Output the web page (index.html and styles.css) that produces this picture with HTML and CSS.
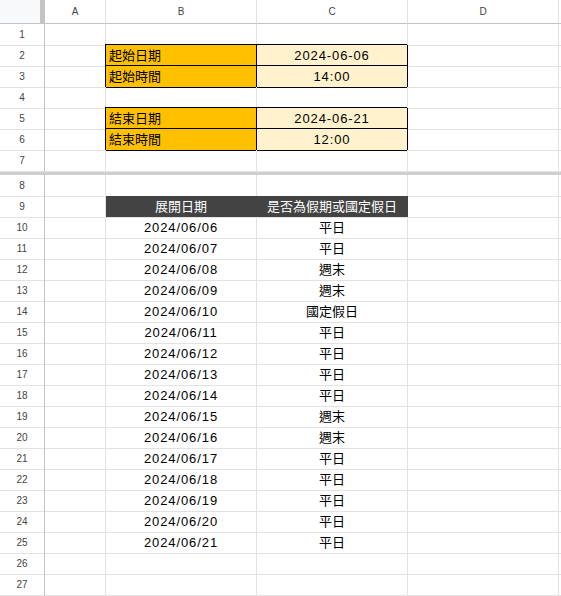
FILE: index.html
```html
<!DOCTYPE html>
<html lang="zh-Hant">
<head>
<meta charset="utf-8">
<title>Sheet</title>
<link rel="stylesheet" href="styles.css">
</head>
<body>
<div class="sheet">
  <div class="row head">
    <div class="cell corner"></div>
    <div class="cell col">A</div>
    <div class="cell col">B</div>
    <div class="cell col">C</div>
    <div class="cell col">D</div>
    <div class="cell end"></div>
  </div>
  <div class="row"><div class="cell rh">1</div><div class="cell"></div><div class="cell"></div><div class="cell"></div><div class="cell"></div><div class="cell end"></div></div>
  <div class="row"><div class="cell rh">2</div><div class="cell"></div><div class="cell box label">起始日期</div><div class="cell box value num">2024-06-06</div><div class="cell"></div><div class="cell end"></div></div>
  <div class="row"><div class="cell rh">3</div><div class="cell"></div><div class="cell box label">起始時間</div><div class="cell box value num">14:00</div><div class="cell"></div><div class="cell end"></div></div>
  <div class="row"><div class="cell rh">4</div><div class="cell"></div><div class="cell"></div><div class="cell"></div><div class="cell"></div><div class="cell end"></div></div>
  <div class="row"><div class="cell rh">5</div><div class="cell"></div><div class="cell box label">結束日期</div><div class="cell box value num">2024-06-21</div><div class="cell"></div><div class="cell end"></div></div>
  <div class="row"><div class="cell rh">6</div><div class="cell"></div><div class="cell box label">結束時間</div><div class="cell box value num">12:00</div><div class="cell"></div><div class="cell end"></div></div>
  <div class="row"><div class="cell rh">7</div><div class="cell"></div><div class="cell"></div><div class="cell"></div><div class="cell"></div><div class="cell end"></div></div>
  <div class="freeze"></div>
  <div class="row"><div class="cell rh">8</div><div class="cell"></div><div class="cell"></div><div class="cell"></div><div class="cell"></div><div class="cell end"></div></div>
  <div class="row"><div class="cell rh">9</div><div class="cell"></div><div class="cell th">展開日期</div><div class="cell th">是否為假期或國定假日</div><div class="cell"></div><div class="cell end"></div></div>
  <div class="row"><div class="cell rh">10</div><div class="cell"></div><div class="cell c num">2024/06/06</div><div class="cell c">平日</div><div class="cell"></div><div class="cell end"></div></div>
  <div class="row"><div class="cell rh">11</div><div class="cell"></div><div class="cell c num">2024/06/07</div><div class="cell c">平日</div><div class="cell"></div><div class="cell end"></div></div>
  <div class="row"><div class="cell rh">12</div><div class="cell"></div><div class="cell c num">2024/06/08</div><div class="cell c">週末</div><div class="cell"></div><div class="cell end"></div></div>
  <div class="row"><div class="cell rh">13</div><div class="cell"></div><div class="cell c num">2024/06/09</div><div class="cell c">週末</div><div class="cell"></div><div class="cell end"></div></div>
  <div class="row"><div class="cell rh">14</div><div class="cell"></div><div class="cell c num">2024/06/10</div><div class="cell c">國定假日</div><div class="cell"></div><div class="cell end"></div></div>
  <div class="row"><div class="cell rh">15</div><div class="cell"></div><div class="cell c num">2024/06/11</div><div class="cell c">平日</div><div class="cell"></div><div class="cell end"></div></div>
  <div class="row"><div class="cell rh">16</div><div class="cell"></div><div class="cell c num">2024/06/12</div><div class="cell c">平日</div><div class="cell"></div><div class="cell end"></div></div>
  <div class="row"><div class="cell rh">17</div><div class="cell"></div><div class="cell c num">2024/06/13</div><div class="cell c">平日</div><div class="cell"></div><div class="cell end"></div></div>
  <div class="row"><div class="cell rh">18</div><div class="cell"></div><div class="cell c num">2024/06/14</div><div class="cell c">平日</div><div class="cell"></div><div class="cell end"></div></div>
  <div class="row"><div class="cell rh">19</div><div class="cell"></div><div class="cell c num">2024/06/15</div><div class="cell c">週末</div><div class="cell"></div><div class="cell end"></div></div>
  <div class="row"><div class="cell rh">20</div><div class="cell"></div><div class="cell c num">2024/06/16</div><div class="cell c">週末</div><div class="cell"></div><div class="cell end"></div></div>
  <div class="row"><div class="cell rh">21</div><div class="cell"></div><div class="cell c num">2024/06/17</div><div class="cell c">平日</div><div class="cell"></div><div class="cell end"></div></div>
  <div class="row"><div class="cell rh">22</div><div class="cell"></div><div class="cell c num">2024/06/18</div><div class="cell c">平日</div><div class="cell"></div><div class="cell end"></div></div>
  <div class="row"><div class="cell rh">23</div><div class="cell"></div><div class="cell c num">2024/06/19</div><div class="cell c">平日</div><div class="cell"></div><div class="cell end"></div></div>
  <div class="row"><div class="cell rh">24</div><div class="cell"></div><div class="cell c num">2024/06/20</div><div class="cell c">平日</div><div class="cell"></div><div class="cell end"></div></div>
  <div class="row"><div class="cell rh">25</div><div class="cell"></div><div class="cell c num">2024/06/21</div><div class="cell c">平日</div><div class="cell"></div><div class="cell end"></div></div>
  <div class="row"><div class="cell rh">26</div><div class="cell"></div><div class="cell"></div><div class="cell"></div><div class="cell"></div><div class="cell end"></div></div>
  <div class="row"><div class="cell rh">27</div><div class="cell"></div><div class="cell"></div><div class="cell"></div><div class="cell"></div><div class="cell end"></div></div>
  <div class="row tail"><div class="cell rh"></div><div class="cell"></div><div class="cell"></div><div class="cell"></div><div class="cell"></div><div class="cell end"></div></div>
</div>
</body>
</html>
```

FILE: styles.css
```css
* { box-sizing: border-box; }
html, body {
  margin: 0;
  padding: 0;
  background: #fff;
  overflow: hidden;
}
body {
  font-family: "Liberation Sans", "Noto Sans CJK TC", sans-serif;
  font-size: 13px;
  color: #000;
}
.sheet {
  width: 561px;
  height: 596px;
  overflow: hidden;
}
.row {
  display: grid;
  grid-template-columns: 45px 61px 151px 151px 151px 1fr;
  height: 21px;
}
.row.head {
  height: 24px;
}
.row.tail {
  height: 2px;
}
.tail .cell {
  border-bottom: none;
}
.cell {
  display: flex;
  align-items: center;
  border-right: 1px solid #e2e2e2;
  border-bottom: 1px solid #e2e2e2;
  white-space: nowrap;
  overflow: visible;
  line-height: 20px;
  padding-top: 1px;
}
.cell.end {
  border-right: none;
}
.head .cell {
  border-bottom-color: #c4c4c4;
  justify-content: center;
  color: #444;
  font-size: 10px;
}
.head .corner {
  background: #f8f9fa;
  border-right: 5px solid #c4c4c4;
}
.rh {
  justify-content: center;
  color: #444;
  font-size: 10px;
  border-right-color: #c4c4c4;
}
.freeze {
  height: 4px;
  background: #cfcfcf;
}
.box {
  border-right-color: #000;
  border-bottom-color: #000;
  box-shadow: -1px -1px 0 0 #000;
}
.label {
  background: #ffc000;
  padding-left: 3px;
}
.value {
  background: #fff2cc;
  justify-content: center;
}
.num {
  letter-spacing: 0.9px;
}
.c {
  justify-content: center;
}
.th {
  background: #434343;
  color: #fff;
  justify-content: center;
  border-right-color: #434343;
}
```
